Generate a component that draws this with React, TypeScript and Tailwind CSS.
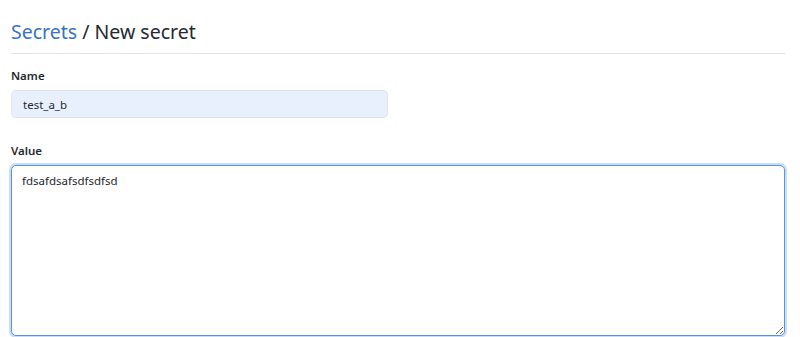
import { useState } from 'react';

export default function App() {
  const [name, setName] = useState('test_a_b');
  const [value, setValue] = useState('fdsafdsafsdfsdfsd');

  return (
    <div className="w-[800px] h-[337px] bg-white px-[11px] overflow-hidden text-[#24292e]" style={{ fontFamily: '"Noto Sans", "Open Sans", sans-serif' }}>
      {/* Header */}
      <div className="pt-[18px] pb-[7px] border-b border-[#e1e4e8] mr-[4px]">
        <h2 className="text-[19.5px] leading-[28px] font-normal">
          <a href="#" className="text-[#3673c4]">Secrets</a>
          <span className="text-[#24292e]"> / New secret</span>
        </h2>
      </div>

      {/* Name */}
      <div className="mt-[14px]">
        <label className="block text-[11.5px] font-semibold leading-[16px] mb-[6px]">Name</label>
        <input
          type="text"
          value={name}
          onChange={(e) => setName(e.target.value)}
          className="w-[377px] h-[28px] px-[11px] text-[11.5px] bg-[#e8f0fe] border border-[#dfe3ea] rounded-[5px] outline-none"
        />
      </div>

      {/* Value */}
      <div className="mt-[25px]">
        <label className="block text-[11.5px] font-semibold leading-[16px] mb-[6px]">Value</label>
        <textarea
          value={value}
          onChange={(e) => setValue(e.target.value)}
          className="block w-[774px] h-[171px] px-[10px] py-[6px] text-[11.5px] leading-[18px] bg-white border border-[#5b93d8] rounded-[5px] outline-none shadow-[0_0_0_2px_rgba(3,102,214,0.22)]"
        />
      </div>
    </div>
  );
}
